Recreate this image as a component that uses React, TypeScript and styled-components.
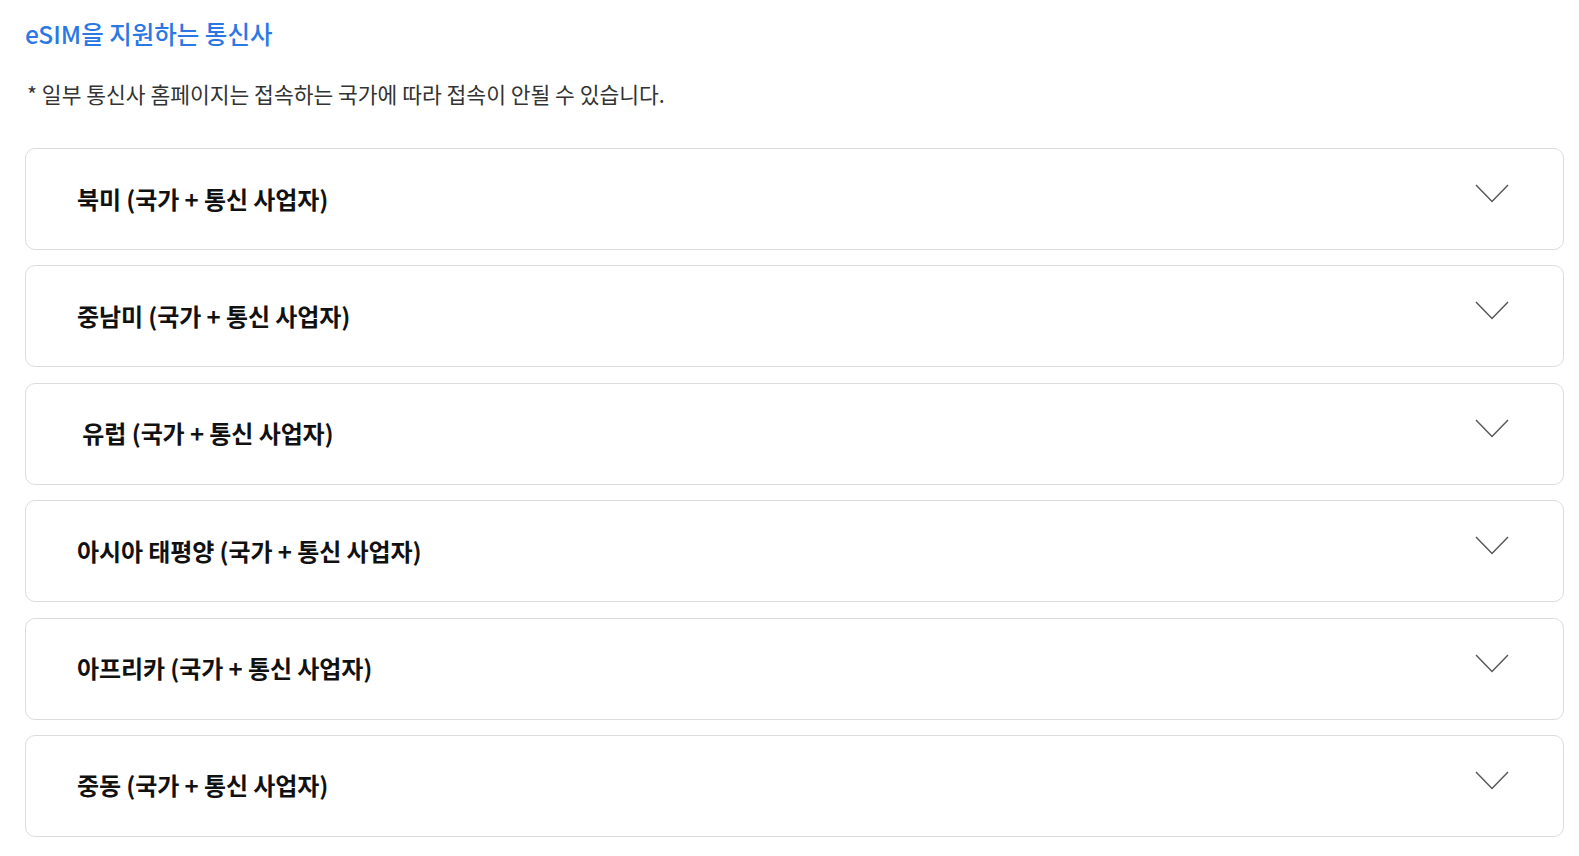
import React from 'react'
import styled, { createGlobalStyle } from 'styled-components'

const GlobalStyle = createGlobalStyle`
  html, body {
    margin: 0;
    padding: 0;
    background: #fff;
  }
  body {
    font-family: "Noto Sans CJK KR", "Noto Sans", sans-serif;
    color: #111;
  }
`

const Page = styled.div`
  padding: 17px 15px 20px 25px;
`

const Title = styled.h2`
  margin: 0;
  font-size: 24.5px;
  line-height: 34px;
  font-weight: 500;
  color: #2b78e4;
`

const Notice = styled.p`
  margin: 29px 0 0 2px;
  font-size: 21.5px;
  line-height: 28px;
  font-weight: 400;
  color: #333;
`

const List = styled.div`
  margin-top: 40px;
  display: flex;
  flex-direction: column;
  gap: 15.4px;
`

const Card = styled.div`
  box-sizing: border-box;
  height: 102px;
  border: 1px solid #dcdcdc;
  border-radius: 10px;
  display: flex;
  align-items: center;
  justify-content: space-between;
  padding: 0 54px 0 51px;
  cursor: pointer;
`

const CardTitle = styled.span`
  padding-bottom: 2px;
  font-size: 24px;
  font-weight: 700;
  letter-spacing: -0.1px;
  color: #111;
  white-space: pre;
`

const Chevron = styled.svg`
  width: 34px;
  height: 19px;
  margin-top: -11px;
  flex-shrink: 0;
`

const regions = [
  '북미 (국가 + 통신 사업자)',
  '중남미 (국가 + 통신 사업자)',
  ' 유럽 (국가 + 통신 사업자)',
  '아시아 태평양 (국가 + 통신 사업자)',
  '아프리카 (국가 + 통신 사업자)',
  '중동 (국가 + 통신 사업자)',
]

export default function App() {
  return (
    <>
      <GlobalStyle />
      <Page>
        <Title>eSIM을 지원하는 통신사</Title>
        <Notice>* 일부 통신사 홈페이지는 접속하는 국가에 따라 접속이 안될 수 있습니다.</Notice>
        <List>
          {regions.map((r) => (
            <Card key={r}>
              <CardTitle>{r}</CardTitle>
              <Chevron viewBox="0 0 34 19" fill="none">
                <polyline points="1,1 17,17.5 33,1" stroke="#555" strokeWidth="1.4" />
              </Chevron>
            </Card>
          ))}
        </List>
      </Page>
    </>
  )
}
